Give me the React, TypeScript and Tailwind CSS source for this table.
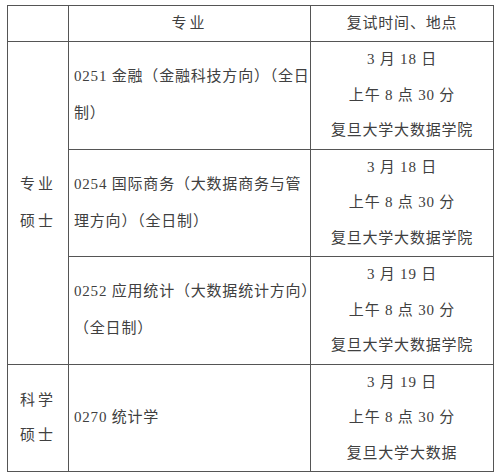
import React from 'react';

const font = { fontFamily: '"Liberation Serif", "Noto Sans CJK SC", serif' };

interface Row {
  lines: string[];
  time: string[];
}

const proRows: Row[] = [
  { lines: ['0251 金融（金融科技方向）（全日', '制）'], time: ['3 月 18 日', '上午 8 点 30 分', '复旦大学大数据学院'] },
  { lines: ['0254 国际商务（大数据商务与管', '理方向）（全日制）'], time: ['3 月 18 日', '上午 8 点 30 分', '复旦大学大数据学院'] },
  { lines: ['0252 应用统计（大数据统计方向）', '（全日制）'], time: ['3 月 19 日', '上午 8 点 30 分', '复旦大学大数据学院'] },
];

function TimeCell({ time }: { time: string[] }) {
  return (
    <td className="border border-[#555] text-center align-middle leading-[35.5px]">
      {time.map((t) => (
        <div key={t}>{t}</div>
      ))}
    </td>
  );
}

function MajorCell({ lines }: { lines: string[] }) {
  return (
    <td className="border border-[#555] pl-[5px] align-middle leading-[37px]">
      {lines.map((l) => (
        <div key={l} className="whitespace-nowrap">{l}</div>
      ))}
    </td>
  );
}

export default function App() {
  return (
    <div className="w-[500px] h-[475px] bg-white pt-[5px] pl-[7px]" style={font}>
      <table className="table-fixed border-collapse w-[486px] text-[15px] tracking-[0.8px] text-[#404040]">
        <colgroup>
          <col className="w-[61px]" />
          <col className="w-[242px]" />
          <col className="w-[183px]" />
        </colgroup>
        <tbody>
          <tr className="h-[36px]">
            <td className="border border-[#555]" />
            <td className="border border-[#555] text-center tracking-[3px]">专业</td>
            <td className="border border-[#555] text-center">复试时间、地点</td>
          </tr>
          {proRows.map((r, i) => (
            <tr key={i} className={i === 1 ? 'h-[106px]' : 'h-[107px]'}>
              {i === 0 && (
                <td rowSpan={3} className="border border-[#555] text-center align-middle leading-[37px]">
                  <div className="tracking-[3px]">专业</div>
                  <div className="tracking-[3px]">硕士</div>
                </td>
              )}
              <MajorCell lines={r.lines} />
              <TimeCell time={r.time} />
            </tr>
          ))}
          <tr className="h-[106px]">
            <td className="border border-[#555] text-center align-middle leading-[35px]">
              <div className="tracking-[3px]">科学</div>
              <div className="tracking-[3px]">硕士</div>
            </td>
            <MajorCell lines={['0270 统计学']} />
            <TimeCell time={['3 月 19 日', '上午 8 点 30 分', '复旦大学大数据']} />
          </tr>
        </tbody>
      </table>
    </div>
  );
}
